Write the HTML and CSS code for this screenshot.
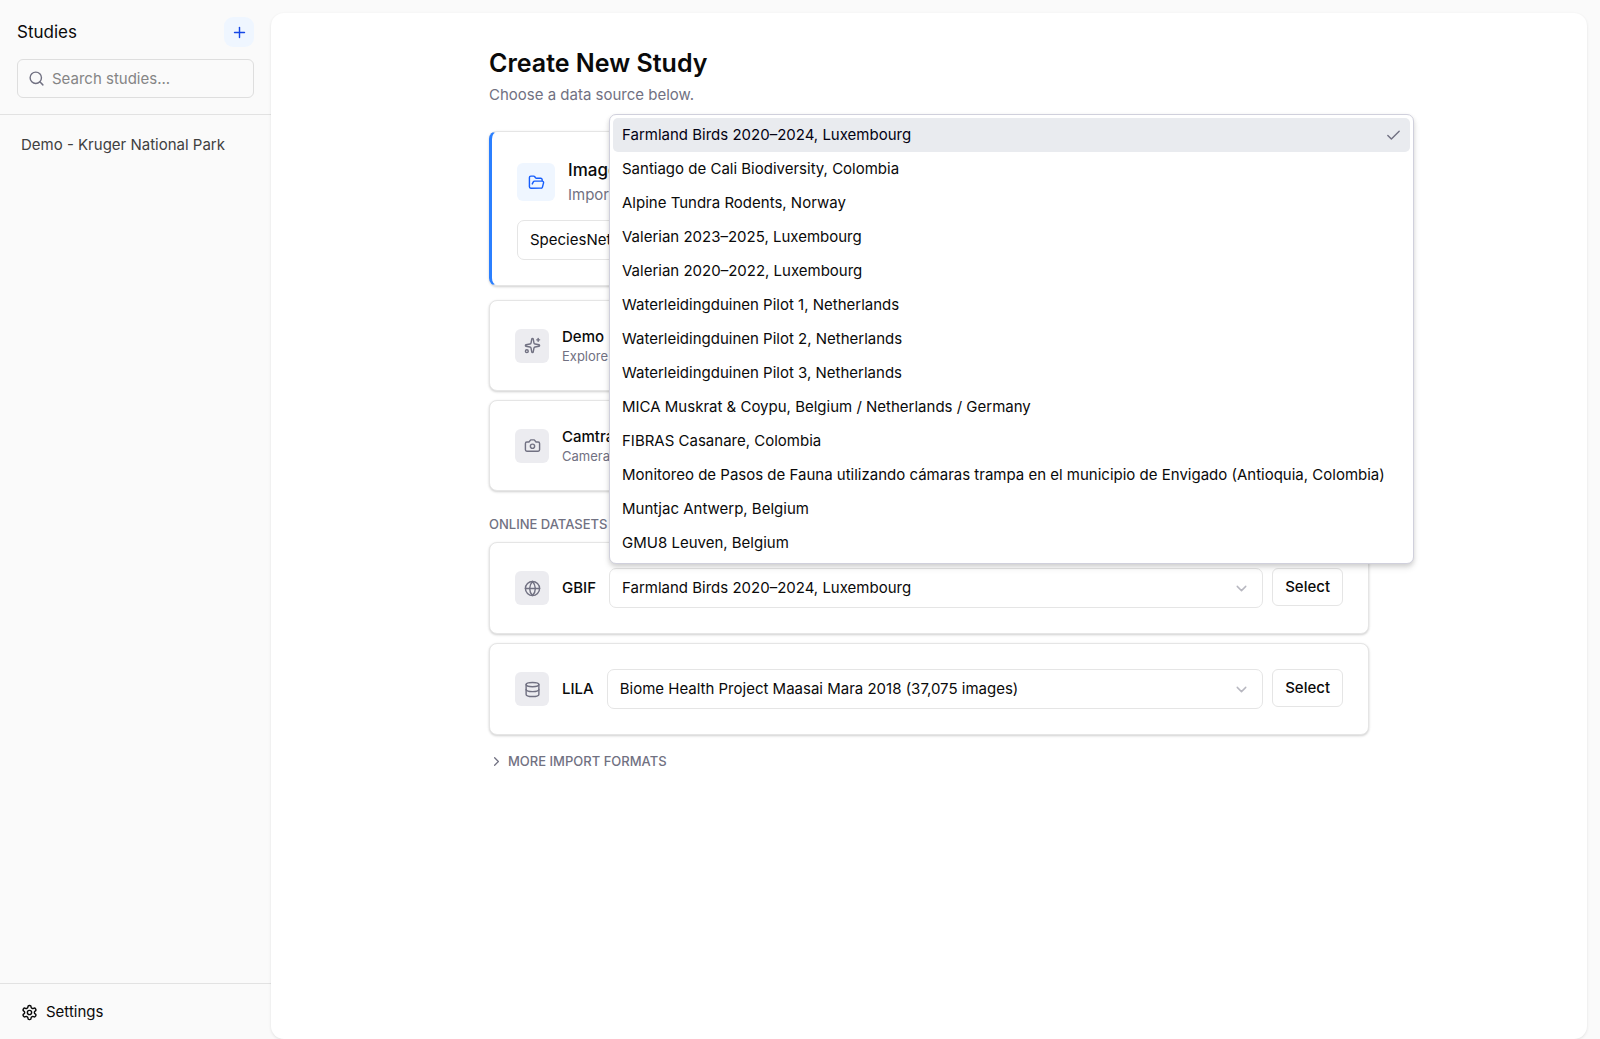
FILE: index.html
```html
<!DOCTYPE html>
<html lang="en">
<head>
    <meta charset="UTF-8">
    <meta name="viewport" content="width=device-width, initial-scale=1">
    <title>Studies</title>
    <link rel="stylesheet" href="styles.css">
</head>
<body>
    <aside class="sidebar">
        <header class="sidebar-header">
            <div class="sidebar-title">
                <span>Studies</span>
                <button type="button" class="add-btn" aria-label="Add study">
                    <svg class="icon" viewBox="0 0 24 24"><path d="M5 12h14"/><path d="M12 5v14"/></svg>
                </button>
            </div>
            <label class="search">
                <svg class="icon" viewBox="0 0 24 24"><circle cx="11" cy="11" r="8"/><path d="m21 21-4.3-4.3"/></svg>
                <input type="text" placeholder="Search studies..." aria-label="Search studies">
            </label>
        </header>
        <nav class="study-list">
            <a href="#kruger">Demo - Kruger National Park</a>
        </nav>
        <footer class="sidebar-footer">
            <a href="#settings">
                <svg class="icon" viewBox="0 0 24 24"><path d="M12.22 2h-.44a2 2 0 0 0-2 2v.18a2 2 0 0 1-1 1.73l-.43.25a2 2 0 0 1-2 0l-.15-.08a2 2 0 0 0-2.73.73l-.22.38a2 2 0 0 0 .73 2.73l.15.1a2 2 0 0 1 1 1.72v.51a2 2 0 0 1-1 1.74l-.15.09a2 2 0 0 0-.73 2.73l.22.38a2 2 0 0 0 2.73.73l.15-.08a2 2 0 0 1 2 0l.43.25a2 2 0 0 1 1 1.73V20a2 2 0 0 0 2 2h.44a2 2 0 0 0 2-2v-.18a2 2 0 0 1 1-1.73l.43-.25a2 2 0 0 1 2 0l.15.08a2 2 0 0 0 2.73-.73l.22-.39a2 2 0 0 0-.73-2.73l-.15-.08a2 2 0 0 1-1-1.74v-.5a2 2 0 0 1 1-1.74l.15-.09a2 2 0 0 0 .73-2.73l-.22-.38a2 2 0 0 0-2.73-.73l-.15.08a2 2 0 0 1-2 0l-.43-.25a2 2 0 0 1-1-1.73V4a2 2 0 0 0-2-2z"/><circle cx="12" cy="12" r="3"/></svg>
                Settings
            </a>
        </footer>
    </aside>

    <main class="panel">
        <div class="content">
            <h1>Create New Study</h1>
            <p class="lead">Choose a data source below.</p>

            <section class="card card-primary">
                <div class="card-head">
                    <div class="tile tile-blue">
                        <svg class="icon" viewBox="0 0 24 24"><path d="m6 14 1.5-2.9A2 2 0 0 1 9.24 10H20a2 2 0 0 1 1.94 2.5l-1.54 6a2 2 0 0 1-1.95 1.5H4a2 2 0 0 1-2-2V5a2 2 0 0 1 2-2h3.9a2 2 0 0 1 1.69.9l.81 1.2a2 2 0 0 0 1.67.9H18a2 2 0 0 1 2 2v2"/></svg>
                    </div>
                    <div>
                        <h2>Images</h2>
                        <p>Import</p>
                    </div>
                </div>
                <div class="picker">
                    <select aria-label="Model">
                        <option>SpeciesNet</option>
                    </select>
                    <svg class="icon chevron" viewBox="0 0 24 24"><path d="m6 9 6 6 6-6"/></svg>
                </div>
            </section>

            <div class="card-list">
                <section class="card card-row">
                    <div class="tile">
                        <svg class="icon" viewBox="0 0 24 24"><path d="M11.017 2.814a1 1 0 0 1 1.966 0l1.051 5.558a2 2 0 0 0 1.594 1.594l5.558 1.051a1 1 0 0 1 0 1.966l-5.558 1.051a2 2 0 0 0-1.594 1.594l-1.051 5.558a1 1 0 0 1-1.966 0l-1.051-5.558a2 2 0 0 0-1.594-1.594l-5.558-1.051a1 1 0 0 1 0-1.966l5.558-1.051a2 2 0 0 0 1.594-1.594z"/><path d="M20 2v4"/><path d="M22 4h-4"/><circle cx="4" cy="20" r="2"/></svg>
                    </div>
                    <div>
                        <h3>Demo</h3>
                        <p>Explore</p>
                    </div>
                </section>
                <section class="card card-row">
                    <div class="tile">
                        <svg class="icon" viewBox="0 0 24 24"><path d="M14.5 4h-5L7 7H4a2 2 0 0 0-2 2v9a2 2 0 0 0 2 2h16a2 2 0 0 0 2-2V9a2 2 0 0 0-2-2h-3l-2.5-3z"/><circle cx="12" cy="13" r="3"/></svg>
                    </div>
                    <div>
                        <h3>Camtrap</h3>
                        <p>Camera</p>
                    </div>
                </section>
            </div>

            <h4 class="group-title">Online datasets</h4>
            <div class="card-list">
                <section class="card card-row">
                    <div class="tile">
                        <svg class="icon" viewBox="0 0 24 24"><circle cx="12" cy="12" r="10"/><path d="M12 2a14.5 14.5 0 0 0 0 20 14.5 14.5 0 0 0 0-20"/><path d="M2 12h20"/></svg>
                    </div>
                    <label class="source-name" for="gbif">GBIF</label>
                    <div class="picker">
                        <select id="gbif">
                            <option>Farmland Birds 2020–2024, Luxembourg</option>
                        </select>
                        <svg class="icon chevron" viewBox="0 0 24 24"><path d="m6 9 6 6 6-6"/></svg>
                        <ul class="menu" role="listbox" aria-label="GBIF datasets">
                            <li role="option" aria-selected="true">Farmland Birds 2020–2024, Luxembourg
                                <svg class="icon" viewBox="0 0 24 24"><path d="M20 6 9 17l-5-5"/></svg>
                            </li>
                            <li role="option">Santiago de Cali Biodiversity, Colombia</li>
                            <li role="option">Alpine Tundra Rodents, Norway</li>
                            <li role="option">Valerian 2023–2025, Luxembourg</li>
                            <li role="option">Valerian 2020–2022, Luxembourg</li>
                            <li role="option">Waterleidingduinen Pilot 1, Netherlands</li>
                            <li role="option">Waterleidingduinen Pilot 2, Netherlands</li>
                            <li role="option">Waterleidingduinen Pilot 3, Netherlands</li>
                            <li role="option">MICA Muskrat &amp; Coypu, Belgium / Netherlands / Germany</li>
                            <li role="option">FIBRAS Casanare, Colombia</li>
                            <li role="option">Monitoreo de Pasos de Fauna utilizando cámaras trampa en el municipio de Envigado (Antioquia, Colombia)</li>
                            <li role="option">Muntjac Antwerp, Belgium</li>
                            <li role="option">GMU8 Leuven, Belgium</li>
                        </ul>
                    </div>
                    <button type="button" class="select-btn">Select</button>
                </section>
                <section class="card card-row">
                    <div class="tile">
                        <svg class="icon" viewBox="0 0 24 24"><ellipse cx="12" cy="5" rx="9" ry="3"/><path d="M3 5v14a9 3 0 0 0 18 0V5"/><path d="M3 12a9 3 0 0 0 18 0"/></svg>
                    </div>
                    <label class="source-name" for="lila">LILA</label>
                    <div class="picker">
                        <select id="lila">
                            <option>Biome Health Project Maasai Mara 2018 (37,075 images)</option>
                        </select>
                        <svg class="icon chevron" viewBox="0 0 24 24"><path d="m6 9 6 6 6-6"/></svg>
                    </div>
                    <button type="button" class="select-btn">Select</button>
                </section>
            </div>

            <button type="button" class="more-btn">
                <svg class="icon" viewBox="0 0 24 24"><path d="m9 18 6-6-6-6"/></svg>
                More import formats
            </button>
        </div>
    </main>
</body>
</html>
```

FILE: styles.css
```css
* {
    box-sizing: border-box;
}
body {
    display: flex;
    min-height: 100vh;
    margin: 0;
    padding: 13px 13px 0 0;
    background: #fafafa;
    color: #0a0a0a;
    font-family: Inter, sans-serif;
    font-size: 15px;
    line-height: 22px;
}
h1, h2, h3, h4, p, ul {
    margin: 0;
    padding: 0;
}
a {
    color: inherit;
    text-decoration: none;
}
button, input, select {
    font: inherit;
    color: inherit;
    cursor: pointer;
}
.icon {
    flex-shrink: 0;
    width: 17px;
    height: 17px;
    fill: none;
    stroke: currentColor;
    stroke-width: 2;
    stroke-linecap: round;
    stroke-linejoin: round;
}

/* Sidebar */
.sidebar {
    display: flex;
    flex-direction: column;
    flex: 0 0 271px;
    min-width: 0;
}
.sidebar-header {
    display: flex;
    flex-direction: column;
    gap: 12px;
    padding: 4px 17px 16px;
    border-bottom: 1px solid #e2e2e2;
}
.sidebar-title {
    display: flex;
    align-items: center;
    justify-content: space-between;
    font-size: 17px;
}
.add-btn {
    display: flex;
    align-items: center;
    justify-content: center;
    width: 30px;
    height: 30px;
    padding: 0;
    border: none;
    border-radius: 9px;
    background: #eff6ff;
    color: #1447e6;
}
.search {
    display: flex;
    align-items: center;
    gap: 7px;
    height: 39px;
    padding: 0 10px;
    border: 1px solid #dedede;
    border-radius: 6px;
    color: #717182;
}
.search input {
    flex: 1;
    min-width: 0;
    padding: 0;
    border: none;
    outline: none;
    background: none;
    cursor: text;
}
.search input::placeholder {
    color: #858585;
}
.study-list {
    flex: 1;
    padding: 19px 21px;
    color: #404040;
}
.study-list a {
    display: block;
}
.sidebar-footer {
    padding: 17px 21px 16px;
    border-top: 1px solid #e2e2e2;
}
.sidebar-footer a {
    display: flex;
    align-items: center;
    gap: 8px;
}

/* Main panel */
.panel {
    flex: 1;
    padding: 34px;
    border-radius: 13px;
    background: #fff;
    box-shadow: 0 1px 3px rgba(0, 0, 0, 0.1);
}
.content {
    max-width: 880px;
    margin: 0 auto;
}
h1 {
    font-size: 25px;
    font-weight: 600;
    line-height: 32px;
}
.lead {
    margin: 4px 0 24px;
    line-height: 24px;
    color: #717182;
}
.card {
    padding: 25px;
    border: 1px solid #e5e5e5;
    border-radius: 8px;
    background: #fff;
    box-shadow: 0 1px 3px rgba(0, 0, 0, 0.12), 0 1px 2px rgba(0, 0, 0, 0.08);
}
.card p {
    color: #717182;
}
.card-primary {
    display: flex;
    flex-direction: column;
    gap: 13px;
    margin-bottom: 14px;
    border-left: 3px solid #2b7fff;
}
.card-head {
    display: flex;
    align-items: center;
    gap: 13px;
}
.card-head h2 {
    font-size: 17px;
    font-weight: 500;
    line-height: 26px;
}
.card-head p {
    line-height: 24px;
}
.card-list {
    display: flex;
    flex-direction: column;
    gap: 9px;
}
.card-row {
    display: flex;
    align-items: center;
    gap: 13px;
}
.card-row h3 {
    font-size: 15px;
    font-weight: 500;
    line-height: 21px;
}
.card-row p {
    font-size: 13px;
    line-height: 18px;
}
.tile {
    display: flex;
    align-items: center;
    justify-content: center;
    flex-shrink: 0;
    width: 34px;
    height: 34px;
    border-radius: 6px;
    background: #ececf0;
    color: #717182;
}
.tile-blue {
    width: 38px;
    height: 38px;
    background: #eff6ff;
    color: #155dfc;
}
.source-name {
    font-weight: 500;
}
.picker {
    position: relative;
    display: flex;
    flex: 1;
}
.picker select {
    width: 100%;
    height: 40px;
    padding: 0 42px 0 12px;
    border: 1px solid #e5e5e5;
    border-radius: 7px;
    background: #fff;
    appearance: none;
}
.chevron {
    position: absolute;
    top: 12px;
    right: 13px;
    color: #717182;
    opacity: 0.5;
    pointer-events: none;
}
.select-btn {
    align-self: flex-start;
    height: 38px;
    margin-left: -4px;
    padding: 0 12px;
    border: 1px solid #e5e5e5;
    border-radius: 6px;
    background: #fff;
    font-weight: 500;
}
.group-title {
    margin: 24px 0 9px;
    color: #717182;
    font-size: 13px;
    font-weight: 500;
    line-height: 18px;
    text-transform: uppercase;
}
.more-btn {
    display: flex;
    align-items: center;
    gap: 4px;
    margin-top: 17px;
    padding: 0;
    border: none;
    background: none;
    color: #717182;
    font-size: 13px;
    font-weight: 500;
    line-height: 18px;
    text-transform: uppercase;
}
.more-btn .icon {
    width: 15px;
    height: 15px;
}

/* Open drop-down */
.menu {
    position: absolute;
    bottom: calc(100% + 4px);
    left: 0;
    z-index: 10;
    width: max-content;
    padding: 3px;
    border: 1px solid #d0d0dc;
    border-radius: 7px;
    background: #fff;
    box-shadow: 0 4px 6px rgba(0, 0, 0, 0.1), 0 2px 4px rgba(0, 0, 0, 0.1);
    list-style: none;
}
.menu li {
    display: flex;
    align-items: center;
    justify-content: space-between;
    height: 34px;
    padding: 0 8px 0 9px;
    border-radius: 5px;
}
.menu li:not([aria-selected]) {
    padding-right: 25px;
}
.menu li[aria-selected] {
    background: #e9ebef;
    color: #030213;
}
.menu .icon {
    color: #717182;
}
```
